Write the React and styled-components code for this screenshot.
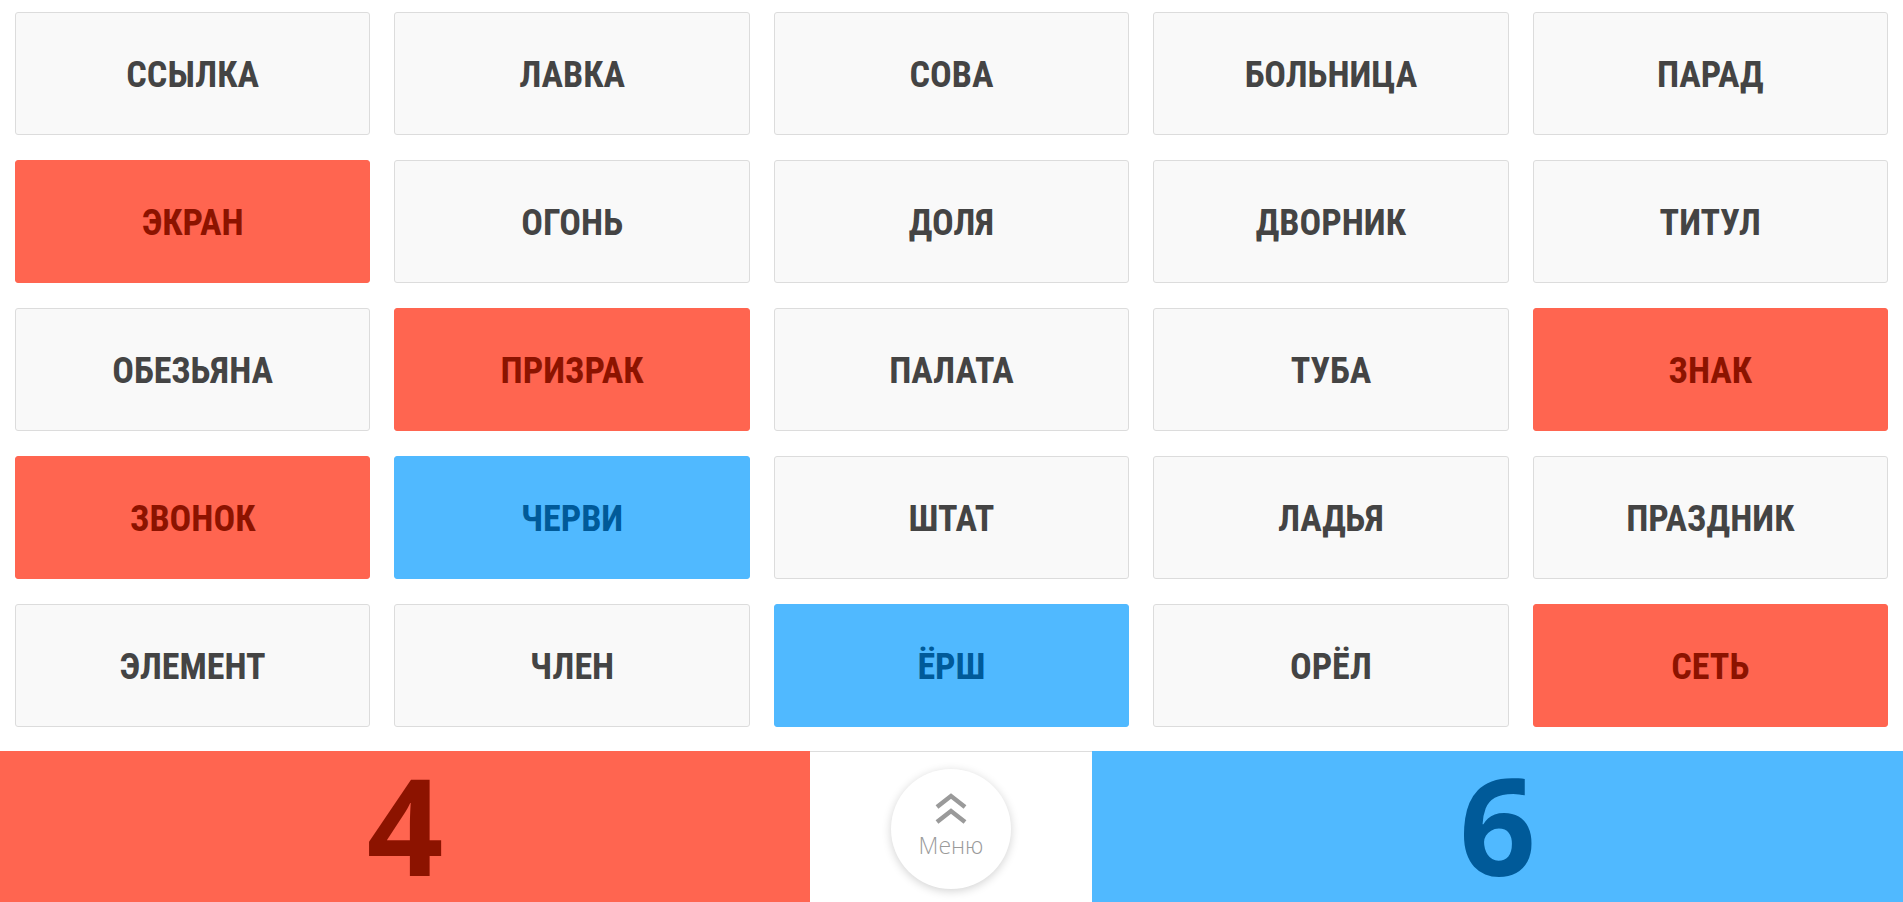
import React from "react"
import styled, { createGlobalStyle } from "styled-components"

const GlobalStyle = createGlobalStyle`
  html, body {
    margin: 0;
    padding: 0;
    background: #fff;
    overflow: hidden;
  }
  * {
    box-sizing: border-box;
  }
`

const colors = {
  red: { bg: "#ff6550", border: "#ff6550", text: "#8c1300" },
  blue: { bg: "#50b9ff", border: "#50b9ff", text: "#005a99" },
  neutral: { bg: "#f9f9f9", border: "#dcdcdc", text: "#444444" },
}

const cards = [
  ["ССЫЛКА", "neutral"],
  ["ЛАВКА", "neutral"],
  ["СОВА", "neutral"],
  ["БОЛЬНИЦА", "neutral"],
  ["ПАРАД", "neutral"],
  ["ЭКРАН", "red"],
  ["ОГОНЬ", "neutral"],
  ["ДОЛЯ", "neutral"],
  ["ДВОРНИК", "neutral"],
  ["ТИТУЛ", "neutral"],
  ["ОБЕЗЬЯНА", "neutral"],
  ["ПРИЗРАК", "red"],
  ["ПАЛАТА", "neutral"],
  ["ТУБА", "neutral"],
  ["ЗНАК", "red"],
  ["ЗВОНОК", "red"],
  ["ЧЕРВИ", "blue"],
  ["ШТАТ", "neutral"],
  ["ЛАДЬЯ", "neutral"],
  ["ПРАЗДНИК", "neutral"],
  ["ЭЛЕМЕНТ", "neutral"],
  ["ЧЛЕН", "neutral"],
  ["ЁРШ", "blue"],
  ["ОРЁЛ", "neutral"],
  ["СЕТЬ", "red"],
]

const App = () => {
  return (
    <>
      <GlobalStyle />
      <Page>
        <Board>
          {cards.map(([word, team], index) => (
            <Card key={index} team={team}>
              {word}
            </Card>
          ))}
        </Board>
        <ScoreBar>
          <Score team="red">4</Score>
          <MenuArea>
            <MenuButton type="button">
              <svg width="34" height="32" viewBox="0 0 34 32">
                <polyline
                  points="3,14 17,3 31,14"
                  fill="none"
                  stroke="#9a9a9a"
                  strokeWidth="4.5"
                />
                <polyline
                  points="3,29 17,18 31,29"
                  fill="none"
                  stroke="#9a9a9a"
                  strokeWidth="4.5"
                />
              </svg>
              <MenuLabel>Меню</MenuLabel>
            </MenuButton>
          </MenuArea>
          <Score team="blue">6</Score>
        </ScoreBar>
      </Page>
    </>
  )
}

export default App

const Page = styled.div`
  width: 100vw;
  height: 100vh;
  display: flex;
  flex-direction: column;
`

const Board = styled.div`
  display: grid;
  grid-template-columns: repeat(5, 1fr);
  grid-auto-rows: 123px;
  gap: 25px 24px;
  padding: 12px 15px 24px;
`

const Card = styled.div`
  display: flex;
  align-items: center;
  justify-content: center;
  background: ${(props) => colors[props.team].bg};
  border: 1px solid ${(props) => colors[props.team].border};
  border-radius: 3px;
  color: ${(props) => colors[props.team].text};
  font-family: "Roboto Condensed", Roboto, sans-serif;
  font-stretch: 83%;
  font-weight: 700;
  font-size: 36px;
  padding-top: 2px;
`

const ScoreBar = styled.div`
  flex: 1;
  display: grid;
  grid-template-columns: 810fr 282fr 811fr;
`

const Score = styled.div`
  display: flex;
  justify-content: center;
  align-items: center;
  padding-bottom: 6px;
  background: ${(props) => colors[props.team].bg};
  color: ${(props) => colors[props.team].text};
  font-family: "Open Sans", sans-serif;
  font-weight: 700;
  font-size: 134px;
  line-height: 1;
`

const MenuArea = styled.div`
  display: flex;
  justify-content: center;
  padding-top: 17px;
  border-top: 1px solid #dddddd;
`

const MenuButton = styled.button`
  width: 120px;
  height: 120px;
  border-radius: 50%;
  border: none;
  background: #fff;
  box-shadow: 0 2px 10px rgba(0, 0, 0, 0.18);
  display: flex;
  flex-direction: column;
  align-items: center;
  justify-content: flex-start;
  padding: 24px 0 0;
  cursor: pointer;
`

const MenuLabel = styled.span`
  margin-top: 9px;
  font-family: "Open Sans", sans-serif;
  font-weight: 300;
  font-size: 23px;
  color: #9a9a9a;
  line-height: 1;
`
